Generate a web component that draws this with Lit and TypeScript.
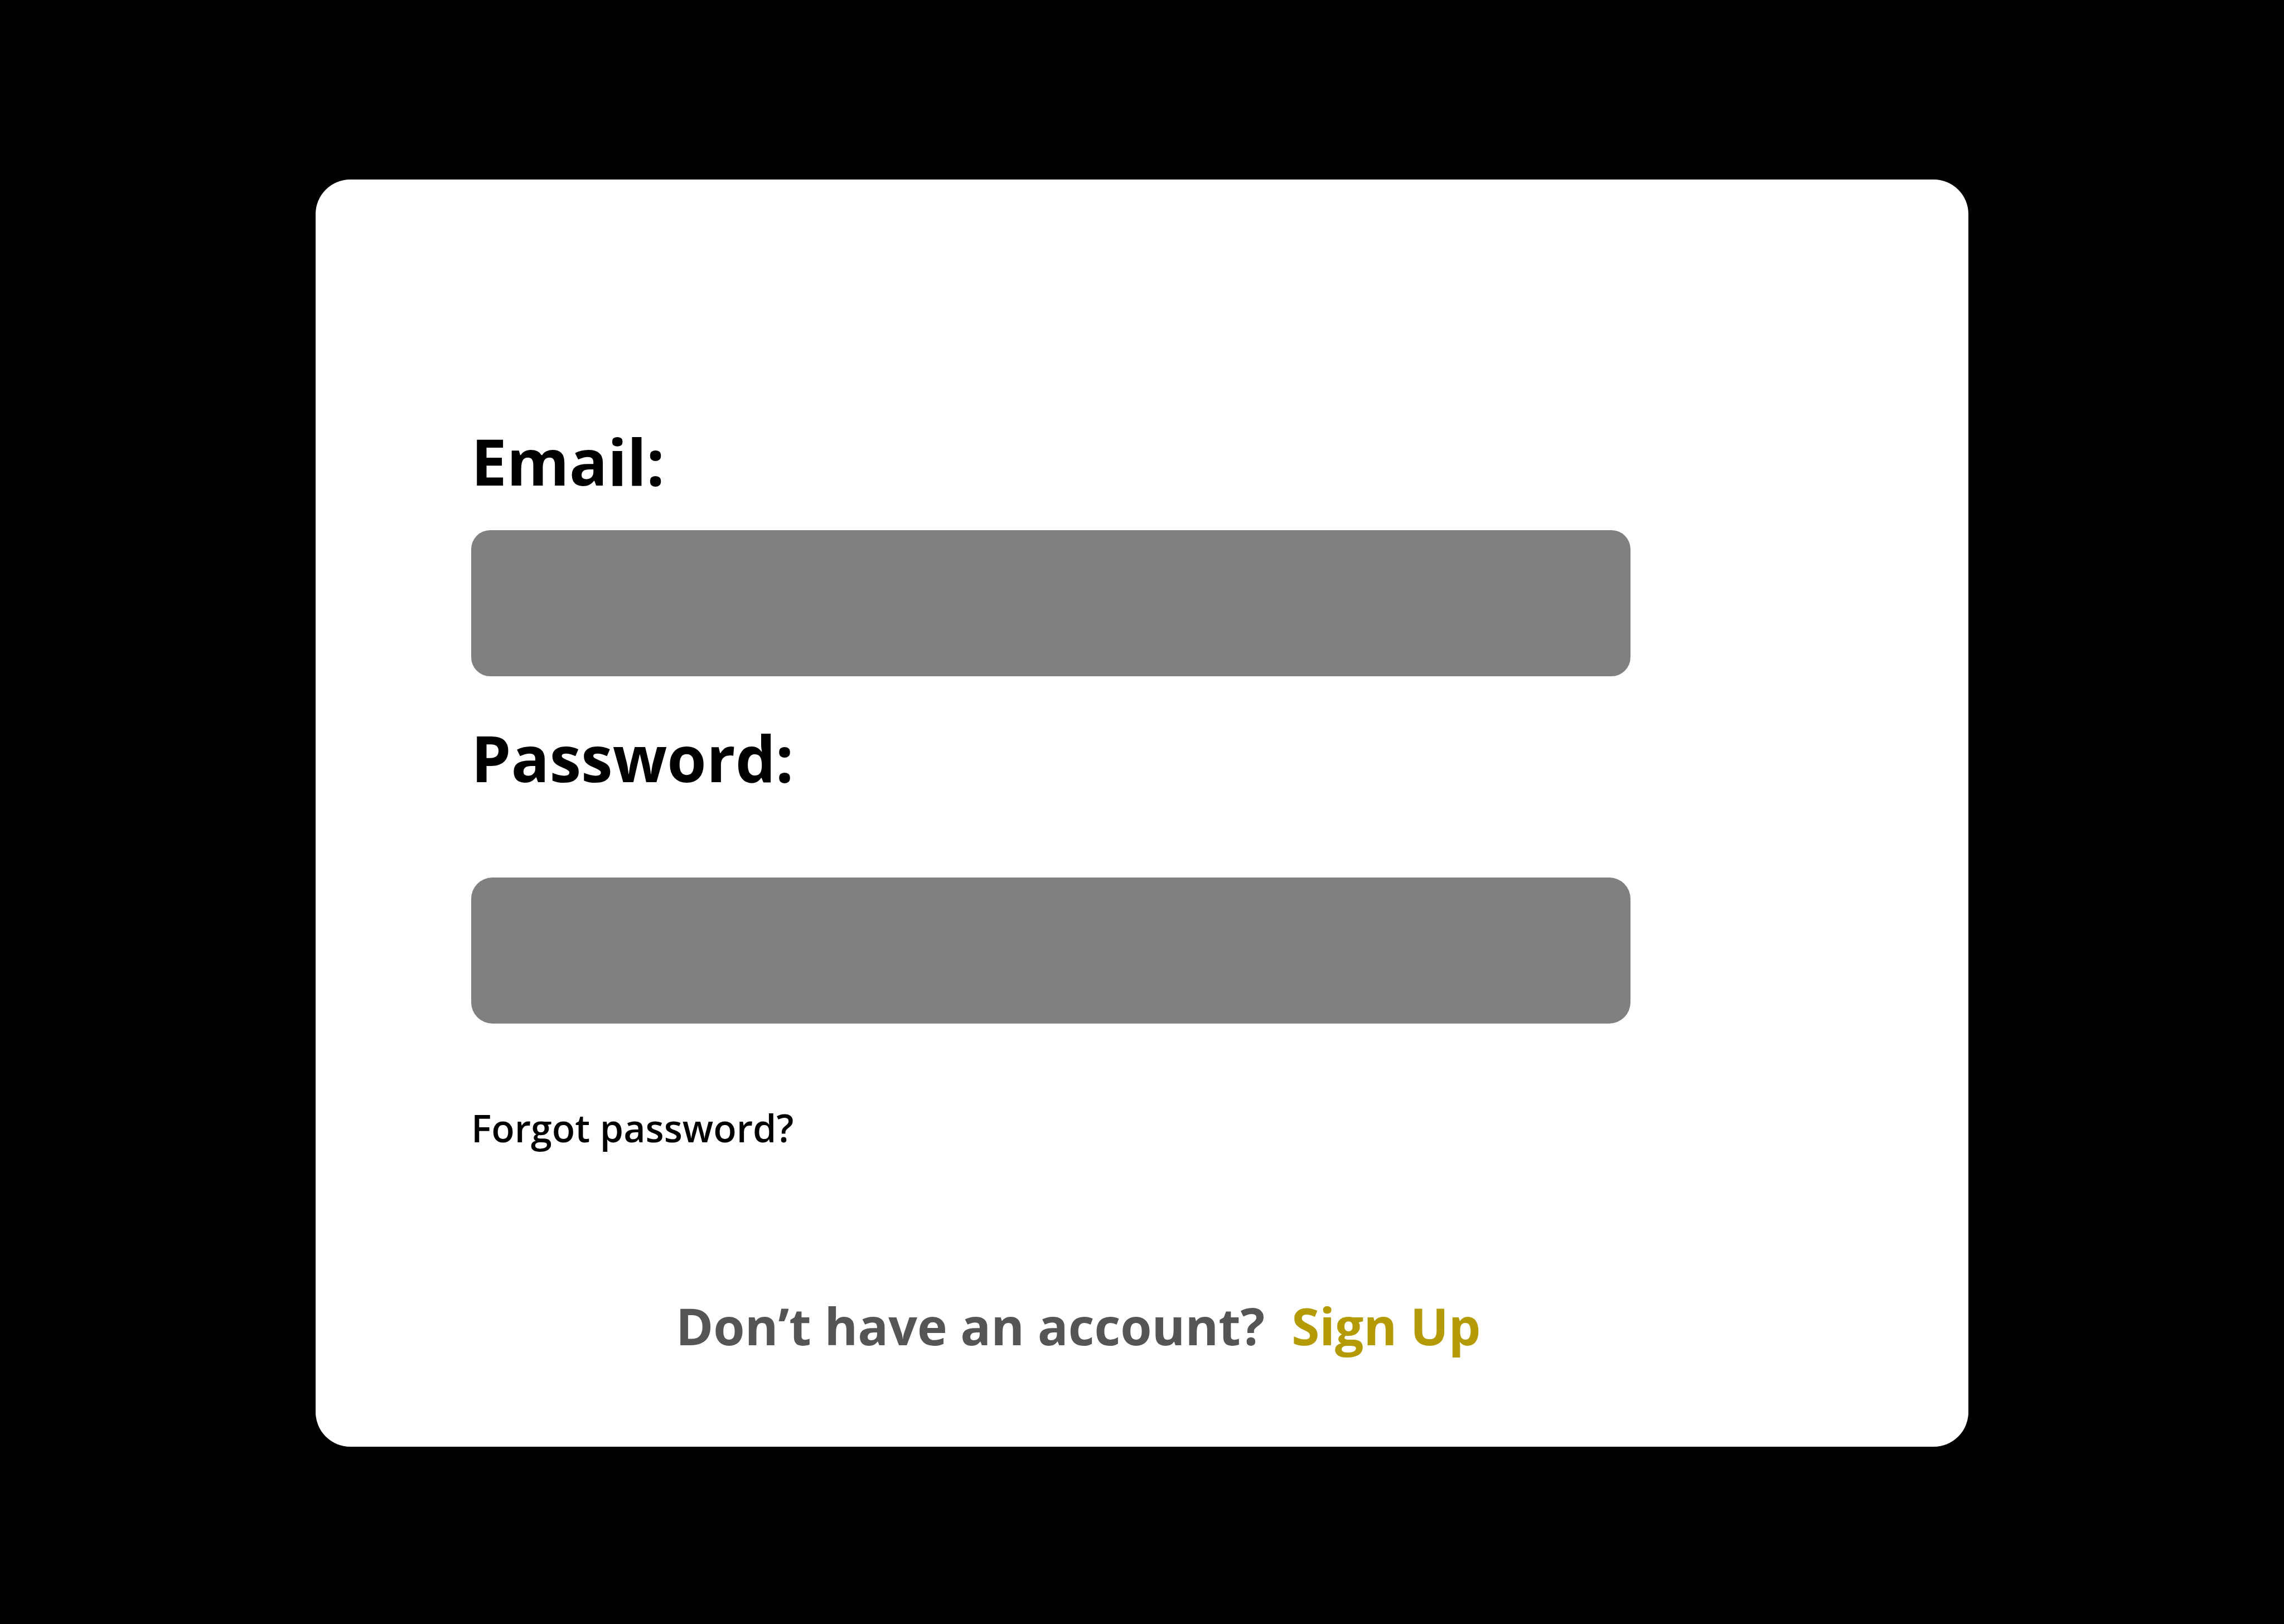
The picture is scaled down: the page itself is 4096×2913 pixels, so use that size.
import { LitElement, html, css } from "lit";
import { customElement } from "lit/decorators.js";

@customElement("app-root")
export class AppRoot extends LitElement {
  static styles = css`
    :host {
      display: flex;
      flex-direction: column;
      box-sizing: border-box;
      min-height: 100vh;
      padding: 322px 566px 318px;
      background: #000;
      color: #000;
      font-family: "Open Sans", "Noto Sans", sans-serif;
    }

    .card {
      display: flex;
      flex-direction: column;
      align-items: stretch;
      padding: 427px 606px 155px 279px;
      border-radius: 62px;
      background: #fff;
    }

    .field {
      display: flex;
      flex-direction: column;
      gap: 46px;
    }

    .field.password {
      gap: 137px;
      margin-top: 68px;
    }

    .label {
      font-size: 114px;
      font-weight: 700;
      line-height: 156px;
    }

    .input {
      box-sizing: border-box;
      width: 100%;
      height: 262px;
      margin: 0;
      padding: 0 64px;
      border: 0;
      border-radius: 34px;
      background: #808080;
      color: #fff;
      font-family: inherit;
      font-size: 91px;
    }

    .password .input {
      border-radius: 38px;
    }

    .forgot {
      align-self: flex-start;
      margin-top: 141px;
      color: #000;
      font-size: 68px;
      font-weight: 600;
      line-height: 92px;
      text-decoration: none;
    }

    .signup {
      display: flex;
      gap: 48px;
      margin: 247px 0 0 367px;
      color: #555;
      font-size: 91px;
      font-weight: 700;
      line-height: 124px;
      white-space: nowrap;
    }

    .signup-link {
      color: #b49a04;
      text-decoration: none;
    }
  `;

  render() {
    return html`
      <form class="card" @submit=${(e: Event) => e.preventDefault()}>
        <div class="field">
          <label class="label" for="email">Email:</label>
          <input class="input" id="email" name="email" type="email" autocomplete="email" />
        </div>
        <div class="field password">
          <label class="label" for="password">Password:</label>
          <input class="input" id="password" name="password" type="password" autocomplete="current-password" />
        </div>
        <a class="forgot" href="#forgot">Forgot password?</a>
        <div class="signup">
          <span>Don’t have an account?</span>
          <a class="signup-link" href="#signup">Sign Up</a>
        </div>
      </form>
    `;
  }
}
